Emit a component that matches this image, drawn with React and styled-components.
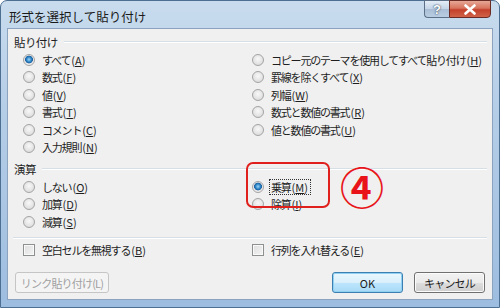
import React from "react";
import styled, { createGlobalStyle } from "styled-components";

const GlobalStyle = createGlobalStyle`
  html, body {
    margin: 0;
    padding: 0;
    background: #ffffff;
  }
  body {
    font-family: "Noto Sans CJK JP", "Liberation Sans", sans-serif;
    font-size: 12px;
    color: #1e1e1e;
  }
`;

const pasteLeft = [
  { label: "すべて", key: "A", checked: true },
  { label: "数式", key: "F" },
  { label: "値", key: "V" },
  { label: "書式", key: "T" },
  { label: "コメント", key: "C" },
  { label: "入力規則", key: "N" },
];

const pasteRight = [
  { label: "コピー元のテーマを使用してすべて貼り付け", key: "H" },
  { label: "罫線を除くすべて", key: "X" },
  { label: "列幅", key: "W" },
  { label: "数式と数値の書式", key: "R" },
  { label: "値と数値の書式", key: "U" },
];

const opLeft = [
  { label: "しない", key: "O" },
  { label: "加算", key: "D" },
  { label: "減算", key: "S" },
];

function Label({ item }) {
  return (
    <>
      <Kana>{item.label}</Kana>
      <AccessKey>
        (<u>{item.key}</u>)
      </AccessKey>
    </>
  );
}

function RadioRow({ item, focused }) {
  return (
    <Row>
      <Radio checked={item.checked} />
      <RowText focused={focused}>
        <Label item={item} />
      </RowText>
    </Row>
  );
}

function App() {
  return (
    <>
      <GlobalStyle />
      <Window>
        <TitleBar>
          <Title>形式を選択して貼り付け</Title>
          <Caption>
            <HelpButton>?</HelpButton>
            <CloseButton>
              <svg width="14" height="11" viewBox="0 0 14 11">
                <path
                  d="M2.5 1.5 L11.5 9.5 M11.5 1.5 L2.5 9.5"
                  stroke="#ffffff"
                  strokeWidth="2.6"
                  strokeLinecap="round"
                />
              </svg>
            </CloseButton>
          </Caption>
        </TitleBar>

        <Client>
          <GroupHeader>
            <span>貼り付け</span>
            <Line />
          </GroupHeader>
          <Columns>
            <Column>
              {pasteLeft.map((item) => (
                <RadioRow key={item.key} item={item} />
              ))}
            </Column>
            <Column>
              {pasteRight.map((item) => (
                <RadioRow key={item.key} item={item} />
              ))}
            </Column>
          </Columns>

          <GroupHeader spaced>
            <span>演算</span>
            <Line />
          </GroupHeader>
          <Columns>
            <Column>
              {opLeft.map((item) => (
                <RadioRow key={item.key} item={item} />
              ))}
            </Column>
            <Column>
              <RadioRow item={{ label: "乗算", key: "M", checked: true }} focused />
              <RadioRow item={{ label: "除算", key: "I" }} />
              <Highlight />
              <Marker>④</Marker>
            </Column>
          </Columns>

          <Divider />

          <Columns>
            <Column>
              <Row>
                <Check />
                <RowText>
                  <Label item={{ label: "空白セルを無視する", key: "B" }} />
                </RowText>
              </Row>
            </Column>
            <Column>
              <Row>
                <Check />
                <RowText>
                  <Label item={{ label: "行列を入れ替える", key: "E" }} />
                </RowText>
              </Row>
            </Column>
          </Columns>

          <ButtonBar>
            <Button disabled>リンク貼り付け(L)</Button>
            <Spacer />
            <Button primary>OK</Button>
            <Button>キャンセル</Button>
          </ButtonBar>
        </Client>
      </Window>
    </>
  );
}

const Window = styled.div`
  width: 500px;
  height: 308px;
  box-sizing: border-box;
  display: flex;
  flex-direction: column;
  padding: 0 6px 7px 6px;
  border: 1px solid #4d6f92;
  border-radius: 7px 7px 0 0;
  background: linear-gradient(
    180deg,
    #c9dcee 0%,
    #b7cfe8 30%,
    #a9c5e3 70%,
    #9dbde0 100%
  );
`;

const TitleBar = styled.div`
  height: 27px;
  display: flex;
  align-items: flex-start;
  justify-content: space-between;
`;

const Title = styled.div`
  padding: 6px 0 0 2px;
  font-size: 12.5px;
  color: #1a1a1a;
`;

const Caption = styled.div`
  display: flex;
  margin-top: -1px;
  margin-right: 2px;
`;

const HelpButton = styled.div`
  width: 25px;
  height: 18px;
  box-sizing: border-box;
  border: 1px solid #5b6f86;
  border-right: none;
  border-radius: 0 0 0 4px;
  background: linear-gradient(180deg, #e4edf7 0%, #c4d4e6 50%, #a9bdd5 51%, #b9cde2 100%);
  color: #ffffff;
  font-family: "Liberation Sans", sans-serif;
  font-weight: bold;
  font-size: 13px;
  text-align: center;
  line-height: 17px;
  text-shadow: 0 0 2px #3d4f66, 0 0 1px #3d4f66;
`;

const CloseButton = styled.div`
  width: 42px;
  height: 18px;
  box-sizing: border-box;
  border: 1px solid #6a2b25;
  border-radius: 0 0 4px 0;
  background: linear-gradient(180deg, #e6a796 0%, #d7735d 45%, #c4402a 55%, #d0634a 100%);
  display: flex;
  align-items: center;
  justify-content: center;
`;

const Client = styled.div`
  flex: 1;
  display: flex;
  flex-direction: column;
  background: #f0f0f0;
  border: 1px solid #8ba3bf;
  padding: 4px 5px 6px 5px;
`;

const GroupHeader = styled.div`
  display: flex;
  align-items: center;
  gap: 6px;
  height: 18px;
  margin-top: ${(p) => (p.spaced ? "4px" : "0")};
  padding-left: 1px;
  font-size: 11.5px;
  letter-spacing: -0.6px;
`;

const Line = styled.div`
  flex: 1;
  height: 1px;
  background: #d5dfe5;
  border-bottom: 1px solid #ffffff;
`;

const Columns = styled.div`
  display: grid;
  grid-template-columns: 229px 1fr;
  padding-left: 10px;
`;

const Column = styled.div`
  position: relative;
  display: flex;
  flex-direction: column;
`;

const Row = styled.div`
  display: flex;
  align-items: center;
  height: 17.5px;
  gap: 6px;
  font-size: 11px;
  white-space: nowrap;
`;

const RowText = styled.span`
  padding: 0 2px 0 1px;
  outline: ${(p) => (p.focused ? "1px dotted #333" : "none")};
  line-height: 14px;
`;

const Kana = styled.span`
  letter-spacing: -1.2px;
`;

const AccessKey = styled.span`
  letter-spacing: 0;
  margin-left: 1px;
`;

const Radio = styled.span`
  width: 12px;
  height: 12px;
  border-radius: 50%;
  box-sizing: border-box;
  border: 1px solid #a4a4a4;
  background: ${(p) =>
    p.checked
      ? "radial-gradient(circle at 50% 45%, #9fd5f6 0px, #2b84c6 2.5px, #1d5f9e 3.6px, #e8e8e8 4.2px, #f6f6f6 100%)"
      : "radial-gradient(circle at 50% 40%, #f8f8f8 0%, #e3e3e3 60%, #d4d4d4 100%)"};
  flex-shrink: 0;
`;

const Check = styled.span`
  width: 12px;
  height: 12px;
  box-sizing: border-box;
  border: 1px solid #8e8f8f;
  background: linear-gradient(135deg, #dedede 0%, #f4f4f4 100%);
  box-shadow: inset 0 0 0 1px #f9f9f9;
  flex-shrink: 0;
`;

const Highlight = styled.div`
  position: absolute;
  left: -6px;
  top: -16px;
  width: 84px;
  height: 46px;
  box-sizing: border-box;
  border: 2px solid #e0201c;
  border-radius: 7px;
  pointer-events: none;
`;

const Marker = styled.div`
  position: absolute;
  left: 88px;
  top: -14px;
  font-size: 44px;
  line-height: 44px;
  font-weight: bold;
  color: #e8141a;
  font-family: "Noto Sans CJK JP", sans-serif;
`;

const Divider = styled.div`
  height: 1px;
  background: #d5dfe5;
  border-bottom: 1px solid #ffffff;
  margin: 6px 0 3px 0;
`;

const ButtonBar = styled.div`
  display: flex;
  align-items: center;
  gap: 11px;
  margin-top: auto;
  padding: 0 2px 0 2px;
`;

const Spacer = styled.div`
  flex: 1;
`;

const Button = styled.button`
  width: ${(p) => (p.disabled ? "94px" : "71px")};
  height: 21px;
  box-sizing: border-box;
  padding: 0;
  white-space: nowrap;
  font-family: "Noto Sans CJK JP", "Liberation Sans", sans-serif;
  font-size: 11px;
  letter-spacing: ${(p) => (p.primary ? "0" : "-0.8px")};
  border-radius: 3px;
  color: ${(p) => (p.disabled ? "#a0a0a0" : "#1a1a1a")};
  border: 1px solid
    ${(p) => (p.disabled ? "#c5c5c5" : p.primary ? "#3c7fb1" : "#707070")};
  background: ${(p) =>
    p.disabled
      ? "#f4f4f4"
      : p.primary
      ? "linear-gradient(180deg, #eaf6fd 0%, #d9f0fc 50%, #bee6fd 51%, #a7d9f5 100%)"
      : "linear-gradient(180deg, #f2f2f2 0%, #ebebeb 50%, #dddddd 51%, #cfcfcf 100%)"};
  box-shadow: inset 0 0 0 1px
    ${(p) => (p.disabled ? "transparent" : p.primary ? "#8fd0f3" : "#fbfbfb")};
`;

export default App;
